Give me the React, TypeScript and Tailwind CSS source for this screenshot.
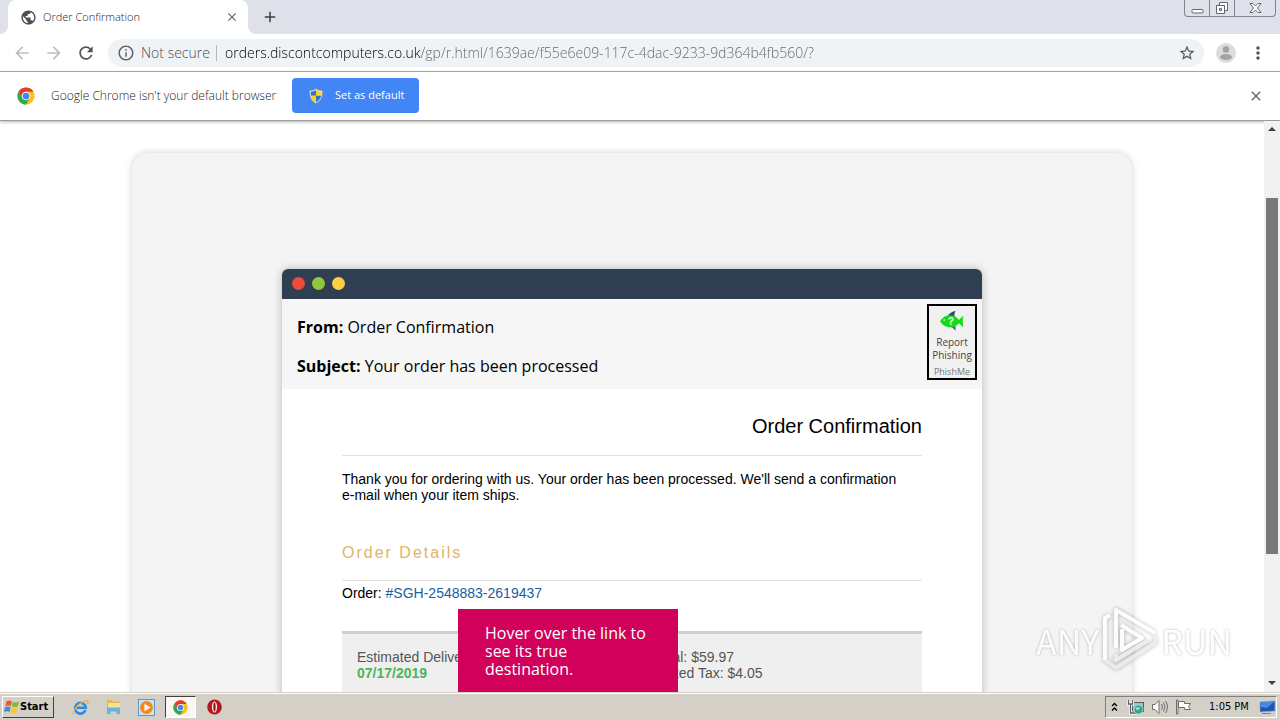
import React, { useState } from 'react';
import {
  MdAdd,
  MdArrowBack,
  MdArrowForward,
  MdClose,
  MdInfoOutline,
  MdMoreVert,
  MdPublic,
  MdRefresh,
  MdStarBorder,
} from 'react-icons/md';

const PAGE_URL = 'orders.discontcomputers.co.uk/gp/r.html/1639ae/f55e6e09-117c-4dac-9233-9d364b4fb560/?';

function ChromeLogo({ size }: { size: number }) {
  return (
    <svg width={size} height={size} viewBox="0 0 48 48" aria-hidden="true">
      <circle cx="24" cy="24" r="23" fill="#fbc116" />
      <path d="M4.1 12.5 A23 23 0 0 1 43.9 12.5 L24 12.5 L14 29.5 Z" fill="#e33b2e" />
      <path d="M4.1 12.5 L14 29.5 L24 35 L34 29.5 L24 47 A23 23 0 0 1 4.1 12.5 Z" fill="#2da94f" />
      <circle cx="24" cy="24" r="11.5" fill="#fff" />
      <circle cx="24" cy="24" r="9" fill="#4285f4" />
    </svg>
  );
}

function ShieldIcon() {
  return (
    <svg width="16" height="16" viewBox="0 0 16 16" aria-hidden="true">
      <path d="M8 .5 C6 2 4 2.4 1.5 2.4 C1.3 8.5 2.8 13 8 15.5 C13.2 13 14.7 8.5 14.5 2.4 C12 2.4 10 2 8 .5Z" fill="#dfe6ee" stroke="#7d8792" strokeWidth=".6" />
      <path d="M8 2 C6.3 3.1 4.7 3.5 2.8 3.6 L2.9 7.8 H8Z" fill="#2f74c9" />
      <path d="M8 2 C9.7 3.1 11.3 3.5 13.2 3.6 L13.1 7.8 H8Z" fill="#f6d421" />
      <path d="M2.9 7.8 C3.4 10.8 5 12.9 8 14.3 V7.8Z" fill="#f6d421" />
      <path d="M13.1 7.8 C12.6 10.8 11 12.9 8 14.3 V7.8Z" fill="#2f74c9" />
    </svg>
  );
}

function FishIcon() {
  return (
    <svg width="28" height="24" viewBox="0 0 28 24" aria-hidden="true">
      <path d="M9 7 C11 3.5 14 1.5 18 1 C16.5 3 16.5 5 17 8Z" fill="#2b4a7d" />
      <path d="M12 17 L18 22.5 L17.5 16Z" fill="#2b6a9d" />
      <path d="M1 12.5 C4 7 9 5.5 13 5.8 C17 6 19.5 8.5 21.5 11 L26.5 6 C25.5 10 25.5 15 26.5 19 L21.5 14.5 C19 17.5 16 19.2 12.5 19 C8 19 4 17 1 12.5Z" fill="#12dd12" />
      <circle cx="5.5" cy="11" r=".9" fill="#eaffea" />
      <text x="9.5" y="16.5" fontSize="11" fontWeight="700" fontFamily="Liberation Sans, sans-serif" fill="#f4fff4">?</text>
    </svg>
  );
}

function TabStrip() {
  return (
    <div className="flex h-[34px] items-start justify-between bg-[#dee1e9]">
      <div className="flex h-full items-end">
        <svg width="8" height="8" viewBox="0 0 8 8" aria-hidden="true">
          <path d="M8 0 V8 H0 A8 8 0 0 0 8 0Z" fill="#fff" />
        </svg>
        <div className="flex h-full w-[240px] items-center rounded-t-lg bg-white pr-2 pl-3">
          <MdPublic size={17} className="text-[#4c4f53]" />
          <span className="ml-1.5 flex-1 text-[11px] font-light text-[#222428]">Order Confirmation</span>
          <button aria-label="Close tab" className="flex h-4 w-4 items-center justify-center text-[#5f6368]">
            <MdClose size={14} />
          </button>
        </div>
        <svg width="8" height="8" viewBox="0 0 8 8" aria-hidden="true">
          <path d="M0 0 V8 H8 A8 8 0 0 1 0 0Z" fill="#fff" />
        </svg>
        <button aria-label="New tab" className="flex h-full w-7 items-center justify-center text-[#3c4043]">
          <MdAdd size={18} />
        </button>
      </div>

      <div className="mr-1 flex h-[17px] rounded-b border border-t-0 border-[#7f8490]">
        <button aria-label="Minimize" className="flex w-6 items-center justify-center">
          <svg width="13" height="15" viewBox="0 0 13 15">
            <rect x="1" y="8.5" width="11" height="3.5" rx="1" fill="#fff" stroke="#62666e" />
          </svg>
        </button>
        <button aria-label="Restore" className="flex w-[26px] items-center justify-center border-x border-[#7f8490]">
          <svg width="14" height="14" viewBox="0 0 14 14" fill="#fff" stroke="#62666e">
            <path d="M4.5 1.5 h8 v8 h-3 v-5 h-5z" />
            <path d="M1.5 4.5 h8 v8 h-8z M4.5 7.5 h2 v2 h-2z" fillRule="evenodd" />
          </svg>
        </button>
        <button aria-label="Close window" className="flex w-10 items-center justify-center">
          <svg width="13" height="12" viewBox="0 0 13 12">
            <path d="M1 1.5 H4 L6.5 4 L9 1.5 H12 L8.5 6 L12 10.5 H9 L6.5 8 L4 10.5 H1 L4.5 6Z" fill="#fff" stroke="#62666e" />
          </svg>
        </button>
      </div>
    </div>
  );
}

function Toolbar() {
  const [url, setUrl] = useState(PAGE_URL);

  return (
    <div className="flex h-[38px] items-center border-b border-[#adadad] bg-white pr-3 pl-3">
      <button aria-label="Back" className="mr-3 text-[#bcbec1]">
        <MdArrowBack size={20} />
      </button>
      <button aria-label="Forward" className="mr-3 text-[#bcbec1]">
        <MdArrowForward size={20} />
      </button>
      <button aria-label="Reload" className="mr-3 text-[#505357]">
        <MdRefresh size={20} />
      </button>
      <div className="flex h-7 flex-1 items-center rounded-full bg-[#f0f3f6] pr-2 pl-[9px]">
        <MdInfoOutline size={18} className="text-[#5f6368]" />
        <label htmlFor="address" className="ml-1.5 w-[69px] text-sm font-light whitespace-nowrap text-[#4c5055]">
          Not secure
        </label>
        <span className="mr-2 ml-1.5 h-4 w-px bg-[#b4b8bc]" />
        <input
          id="address"
          value={url}
          onChange={(e) => setUrl(e.target.value)}
          className="min-w-0 flex-1 bg-[linear-gradient(90deg,#000_196px,#5f6368_196px)] bg-clip-text text-sm font-light text-transparent caret-black outline-none"
        />
        <button aria-label="Bookmark this page" className="text-[#505357]">
          <MdStarBorder size={18} />
        </button>
      </div>
      <button aria-label="Profile" className="mx-3">
        <svg width="20" height="20" viewBox="0 0 20 20">
          <circle cx="10" cy="10" r="10" fill="#dcdcdc" />
          <circle cx="10" cy="6.5" r="3.2" fill="#a2a2a2" />
          <ellipse cx="10" cy="14" rx="6" ry="3" fill="#a2a2a2" />
        </svg>
      </button>
      <button aria-label="Menu" className="text-[#505357]">
        <MdMoreVert size={20} />
      </button>
    </div>
  );
}

function DefaultBrowserBar() {
  return (
    <div className="relative flex h-[49px] items-center border-b border-[#9c9c9c] bg-white pr-4 pb-px pl-[17px] shadow-[0_1px_3px_rgba(0,0,0,0.3)]">
      <ChromeLogo size={18} />
      <span className="ml-4 w-[229px] text-xs font-light whitespace-nowrap text-[#222428]">Google Chrome isn't your default browser</span>
      <button className="ml-3 flex h-[35px] w-[127px] items-center rounded bg-[#4285f4] pl-4 text-[11px] text-white">
        <ShieldIcon />
        <span className="ml-[11px]">Set as default</span>
      </button>
      <button aria-label="Dismiss" className="ml-auto text-[#5f6368]">
        <MdClose size={16} />
      </button>
    </div>
  );
}

function EmailWindow() {
  return (
    <div className="mx-auto max-w-[700px] overflow-hidden rounded-t-md bg-white shadow-[0_0_8px_rgba(0,0,0,0.25)]">
      <div className="flex h-[30px] items-center gap-[7px] bg-[#2f3e50] pb-px pl-2.5">
        <span className="h-[13px] w-[13px] rounded-full bg-[#ee4b3b]" />
        <span className="h-[13px] w-[13px] rounded-full bg-[#8fc83e]" />
        <span className="h-[13px] w-[13px] rounded-full bg-[#fdd043]" />
      </div>

      <div className="flex items-start justify-between bg-[#f6f6f6] pr-[5px] pl-[15px] font-['Open_Sans',sans-serif] text-black">
        <div className="flex flex-col gap-[15px] pt-4 pb-[11px] text-base">
          <p><b>From:</b> Order Confirmation</p>
          <p><b>Subject:</b> Your order has been processed</p>
        </div>
        <button className="mt-[5px] flex h-[76px] w-[50px] flex-col items-center border-2 border-black bg-[#f1f1f1] pt-1 text-[10px] leading-[13px] text-[#444]">
          <FishIcon />
          <span className="mt-1">Report</span>
          <span>Phishing</span>
          <span className="mt-1 text-[9px] leading-3 text-[#777]">PhishMe</span>
        </button>
      </div>

      <div className="px-15 pt-[25px] font-['Liberation_Sans',Arial,sans-serif] text-sm leading-4 text-black">
        <h1 className="border-b border-[#e2e2e2] pb-[17px] text-right text-xl leading-6">Order Confirmation</h1>
        <p className="pt-[15px]">
          Thank you for ordering with us. Your order has been processed. We'll send a confirmation{' '}
          <span className="whitespace-nowrap">e-mail</span> when your item ships.
        </p>
        <h2 className="mt-10 border-b border-[#e2e2e2] pb-[17px] text-base leading-5 tracking-[2px] text-[#e3b463]">Order Details</h2>
        <div className="relative mt-1">
          Order: <a href="#order" className="text-[#17609f]">#SGH-2548883-2619437</a>
          <div role="tooltip" className="absolute top-6 left-29 h-24 w-[220px] bg-[#d1005a] px-[27px] pt-[15px] font-['Open_Sans',sans-serif] text-base leading-[18px] text-white">
            Hover over the link to see its true destination.
          </div>
        </div>
        <div className="mt-[30px] grid min-h-40 grid-cols-2 border-t-3 border-[#cfcfcf] bg-[#efefef] pt-[15px] text-[#555]">
          <div className="pl-[15px]">
            <p>Estimated Delivery Date:</p>
            <p className="font-bold text-[#4fb25d]">07/17/2019</p>
          </div>
          <div>
            <p>Subtotal: $59.97</p>
            <p>Estimated Tax: $4.05</p>
          </div>
        </div>
      </div>
    </div>
  );
}

function ScrollBar() {
  return (
    <div className="flex w-4 flex-col items-center bg-[#f1f1f1]">
      <svg width="16" height="16" viewBox="0 0 16 16" aria-hidden="true">
        <path d="M4 10 L8 6 L12 10Z" fill="#404040" />
      </svg>
      <div className="flex w-3 flex-1 flex-col">
        <div className="flex-[61]" />
        <div className="flex-[355] bg-[#787878]" />
        <div className="flex-[122]" />
      </div>
      <svg width="16" height="16" viewBox="0 0 16 16" aria-hidden="true">
        <path d="M4 5 L8 9 L12 5Z" fill="#404040" />
      </svg>
    </div>
  );
}

function Watermark() {
  return (
    <div className="pointer-events-none absolute right-12 bottom-4 flex items-center gap-0.5 font-['Noto_Sans_CJK_SC',sans-serif] text-[34px] leading-none text-white opacity-80 [text-shadow:0_0_3px_rgba(0,0,0,0.35)]">
      <span>ANY</span>
      <svg width="58" height="70" viewBox="0 0 58 70" fill="none" stroke="#fff" strokeWidth="4" strokeLinejoin="round" className="drop-shadow-[0_0_2px_rgba(0,0,0,0.35)]">
        <path d="M4 54 V12 L9 9 M15 42 V4 L54 27" />
        <path d="M21 23 V44 L41 32 L20 19" />
        <path d="M4 54 L15 62 L54 37 V31 M15 48 V54 L46 35" stroke="#e9e9e9" />
      </svg>
      <span>RUN</span>
    </div>
  );
}

function Taskbar() {
  return (
    <div className="relative flex h-7 items-center border-t border-[#d4d0c8] bg-[#d4d0c8] pt-px pr-[3px] pl-0.5 font-['DejaVu_Sans_Condensed','DejaVu_Sans',sans-serif] text-[11px] text-black shadow-[inset_0_1px_0_#fff]">
      <button className="mr-[18px] flex h-[22px] w-[52px] items-center border border-t-white border-r-[#404040] border-b-[#404040] border-l-white pl-px font-bold">
        <svg width="16" height="16" viewBox="0 0 16 16" aria-hidden="true">
          <path d="M2.5 2.5 Q5 .8 7.8 2.3 L6.8 7 Q4 5.8 1.3 7.2Z" fill="#f0562b" />
          <path d="M8.8 2.8 Q11.5 4.2 15 2.5 L13.8 7.4 Q10.8 8.8 7.8 7.3Z" fill="#7fbb3c" />
          <path d="M1 8.2 Q4 6.9 6.6 8.2 L5.5 13 Q3 11.7 0 13Z" fill="#3f8bdc" />
          <path d="M7.5 8.6 Q10.5 9.8 13.5 8.4 L12.3 13.3 Q9.5 14.9 6.4 13.4Z" fill="#fbc32c" />
        </svg>
        Start
      </button>

      <button aria-label="Internet Explorer" className="mr-4">
        <svg width="17" height="17" viewBox="0 0 17 17" fill="none">
          <path d="M13.5 11 A5.4 5.4 0 1 1 13.8 8.8 H5" stroke="#2f8ade" strokeWidth="2.6" />
          <path d="M2.2 15.2 C-.5 12 8 2 15.5 1.6 Q17 2.5 15.2 5" stroke="#e8b53b" strokeWidth="1.3" />
        </svg>
      </button>
      <button aria-label="File Explorer" className="mr-4">
        <svg width="17" height="16" viewBox="0 0 17 16">
          <path d="M2 1 h5 l1 1.5 h7 V13 H2Z" fill="#dfb94c" />
          <path d="M3 4 h12 v8 H3Z" fill="#f9e48d" />
          <path d="M2 8.5 h13 v6.5 h-3.500 v-3 H5.500 v3 H2Z" fill="#68b2e0" />
        </svg>
      </button>
      <button aria-label="Media Player" className="mr-2.5">
        <svg width="17" height="17" viewBox="0 0 17 17">
          <rect x=".5" y=".5" width="16" height="16" fill="#cfe2f4" stroke="#5a99d0" />
          <circle cx="8.5" cy="8.5" r="6.5" fill="#f28a17" />
          <path d="M6.5 4.8 L12.5 8.5 L6.5 12.2Z" fill="#fff" />
        </svg>
      </button>
      <button aria-label="Chrome" className="mr-[11px] flex h-[22px] w-[31px] items-center justify-center border border-t-[#404040] border-r-white border-b-white border-l-[#404040] bg-[#f8f7f5]">
        <ChromeLogo size={15} />
      </button>
      <button aria-label="Opera">
        <svg width="15" height="16" viewBox="0 0 15 16">
          <ellipse cx="7.5" cy="8" rx="7.3" ry="7.6" fill="#b8161b" />
          <ellipse cx="7.5" cy="8" rx="2.6" ry="5.6" fill="#f3e6e3" />
          <ellipse cx="7.5" cy="8" rx="1.1" ry="4.600" fill="#8c1013" />
        </svg>
      </button>

      <div className="ml-auto flex h-[22px] items-center border border-t-[#808080] border-r-white border-b-white border-l-[#808080] pl-1">
        <button aria-label="Show hidden icons" className="mr-2">
          <svg width="9" height="12" viewBox="0 0 9 12" fill="none" stroke="#000" strokeWidth="1.4">
            <path d="M2 5 L4.5 2.5 L7 5 M2 9.5 L4.5 7 L7 9.5" />
          </svg>
        </button>
        <svg width="18" height="16" viewBox="0 0 18 16" className="mr-1.5" aria-hidden="true">
          <rect x="5.5" y="3.5" width="11" height="9" fill="#8fc7c7" stroke="#5b5f63" />
          <path d="M1.5 1 v4 h4 v-4 M3.5 5 v9 h6" fill="none" stroke="#fff" strokeWidth="3" />
          <path d="M1.5 1 v4 h4 v-4 M3.5 5 v9 h6" fill="none" stroke="#5b5f63" strokeWidth="1.3" />
          <circle cx="11.5" cy="10.5" r="4.5" fill="#37a18a" stroke="#d9f0ef" strokeWidth=".6" />
          <path d="M8.5 9 Q11 7 13 9 Q12 12 9.5 11Z" fill="#8fd9e6" />
        </svg>
        <svg width="18" height="16" viewBox="0 0 18 16" className="mr-1.5" fill="#fff" stroke="#6d6d6d" aria-hidden="true">
          <path d="M1.5 5.5 h2.5 l4-4 v13 l-4-4 h-2.5z" />
          <path d="M10.5 5 q2 3 0 6 M12.5 3.5 q3 4.5 0 9 M14.5 2 q4 6 0 12" fill="none" />
        </svg>
        <svg width="17" height="16" viewBox="0 0 17 16" className="mr-[17px]" fill="#fff" stroke="#6d6d6d" aria-hidden="true">
          <path d="M1.5 1 h1.5 v14 h-1.5z" />
          <path d="M3.5 2.5 h6 v2 h6 l-2 3 l2 3 h-6 v-2 h-6z" strokeLinejoin="round" />
        </svg>
        <time className="w-10 whitespace-nowrap">1:05 PM</time>
        <svg width="17" height="15" viewBox="0 0 17 15" className="ml-2.5" aria-hidden="true">
          <path d="M1 2 L16 1 V11 L1 12Z" fill="#1c56b4" stroke="#8badd8" strokeWidth=".7" />
          <path d="M1.5 2.5 L15.5 1.5 L8 8 L1.5 7Z" fill="#4b8ade" />
          <path d="M3 13.5 H12" stroke="#6d86a8" />
        </svg>
      </div>
    </div>
  );
}

export default function App() {
  return (
    <div className="flex h-screen flex-col overflow-hidden bg-white font-['Open_Sans',sans-serif]">
      <TabStrip />
      <Toolbar />
      <DefaultBrowserBar />
      <div className="relative flex min-h-0 flex-1">
        <main className="flex-1 overflow-hidden pt-8">
          <div className="mx-auto max-w-[1000px] rounded-2xl bg-[#f4f4f4] pt-29 pb-10 shadow-[0_0_7px_rgba(0,0,0,0.2)]">
            <EmailWindow />
          </div>
        </main>
        <ScrollBar />
        <Watermark />
      </div>
      <Taskbar />
    </div>
  );
}
